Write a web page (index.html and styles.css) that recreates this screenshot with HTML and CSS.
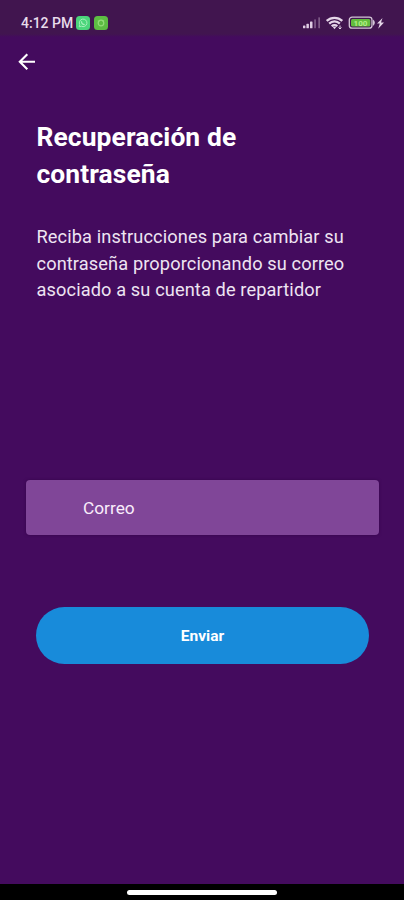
FILE: index.html
```html
<!DOCTYPE html>
<html lang="es">
<head>
<meta charset="utf-8">
<title>Recuperación de contraseña</title>
<link rel="stylesheet" href="styles.css">
</head>
<body>
<div class="screen">
  <header class="status">
    <span class="clock">4:12 PM</span>
    <svg class="app" width="14" height="14" viewBox="0 0 14 14"><rect width="14" height="14" rx="3.5" fill="#4bd57b"/><path d="M3.2 10.800l.6-2.100a3.800 3.800 0 1 1 1.500 1.500z" fill="none" stroke="#a5efbb" stroke-width="1"/><path d="M5.500 5.200c0 2 1.300 3.300 3.200 3.400" fill="none" stroke="#a5efbb" stroke-width="1.200"/></svg>
    <svg class="app second" width="14" height="14" viewBox="0 0 14 14"><rect width="14" height="14" rx="3.500" fill="#5dbd43"/><circle cx="7" cy="7" r="2.800" fill="none" stroke="#93dd78" stroke-width="1.200"/><path d="M4.300 4.500l1 1M9.700 4.500l-1 1" stroke="#93dd78"/></svg>
    <svg class="indicators" width="84" height="18" viewBox="0 0 84 18">
      <g fill="#dfcce3"><rect x="1" y="11.500" width="2.400" height="2.800" rx=".6"/><rect x="4.400" y="9.800" width="2.500" height="4.500" rx=".6"/><rect x="8" y="7.500" width="2.500" height="6.800" rx=".6"/></g>
      <g fill="#7e5b87"><rect x="12.200" y="5.300" width="1.700" height="9" rx=".6"/><rect x="16.300" y="3.200" width="1.700" height="11.100" rx=".6"/></g>
      <g fill="none" stroke="#e5d6e8" stroke-width="2.200"><path d="M24.700 6.900a11.300 11.300 0 0 1 15.600 0"/><path d="M27.200 9.600a7.500 7.500 0 0 1 10.600 0"/><path d="M29.700 12.200a4 4 0 0 1 5.600 0"/></g>
      <path d="M30.500 12.500h4l-2 2.700z" fill="#e5d6e8"/><path d="M38 11.500v3.500M36.500 13.500l1.500 1.500 1.500-1.500" fill="none" stroke="#e5d6e8"/>
      <rect x="47.300" y="3.200" width="22.700" height="11" rx="2.800" fill="#41154f" stroke="#d3c6d7" stroke-width="1.300"/>
      <rect x="49" y="4.900" width="19.300" height="7.600" rx="1.500" fill="#62bd3d"/>
      <path d="M71 5.500q3.800 3.200 0 6.400z" fill="#d3c6d7"/>
      <text class="charge" x="58.500" y="11.600" text-anchor="middle">100</text>
      <path d="M80.500 4l-5.500 5.500h2.800l-1.600 5.200 5.800-6.200h-3z" fill="#e5d6e8"/>
    </svg>
  </header>
  <nav class="nav">
    <svg width="18" height="18" viewBox="0 0 18 18"><path d="M17 8.700H2M9.300 1.200L1.800 8.700l7.500 7.500" fill="none" stroke="#fff" stroke-width="2.100"/></svg>
  </nav>
  <main class="content">
    <h1 class="title">Recuperación de<br>contraseña</h1>
    <p class="intro">Reciba instrucciones para cambiar su<br>contraseña proporcionando su correo<br>asociado a su cuenta de repartidor</p>
    <input class="field" type="email" placeholder="Correo" aria-label="Correo">
    <button class="send" type="button">Enviar</button>
  </main>
  <footer class="gesture"><span class="handle"></span></footer>
</div>
</body>
</html>
```
FILE: styles.css
```css
* { box-sizing: border-box; }
body { margin: 0; background: #440b5e; font-family: Roboto, sans-serif; color: #fff; }
.screen { height: 900px; display: flex; flex-direction: column; background: #440b5e; }
.status { height: 37px; padding: 9px 18px 0 21px; display: flex; align-items: center; background: linear-gradient(#41154f 92%, #440b5e); }
.clock { width: 54px; font-size: 14px; font-weight: 500; color: #e8dceb; white-space: nowrap; }
.app { flex: none; margin-left: 1px; }
.second { margin-left: 4px; }
.indicators { margin-left: auto; }
.charge { font-size: 8px; font-weight: 700; fill: #b2ee86; }
.nav { height: 50px; padding: 16px 0 0 18px; }
.nav svg { display: block; }
.content { flex: 1; display: flex; flex-direction: column; padding: 32px 25px 0 26px; }
.title { margin: 0 0 0 10.500px; font-size: 26.400px; letter-spacing: 0.100px; line-height: 37px; font-weight: 700; white-space: nowrap; }
.intro { margin: 31px 0 0 10.500px; font-size: 18.200px; letter-spacing: 0.120px; line-height: 26.500px; color: #eee4f2; white-space: nowrap; }
.field { margin-top: 176px; height: 55px; border: 0; border-radius: 4px; padding: 2px 57px 0; background: #804698; font: 17.300px Roboto, sans-serif; color: #f9edfb; box-shadow: 0 0 3px #35054b; }
.field::placeholder { color: #f9edfb; opacity: 1; }
.send { margin: 72px 10px 0; height: 57px; border: 0; border-radius: 29px; padding-top: 3px; background: #188bda; color: #fff; font: 700 15.500px Roboto, sans-serif; }
.gesture { height: 16px; background: #000; display: flex; justify-content: center; padding-top: 6px; }
.handle { width: 150px; height: 5px; border-radius: 3px; background: #fff; }
```
